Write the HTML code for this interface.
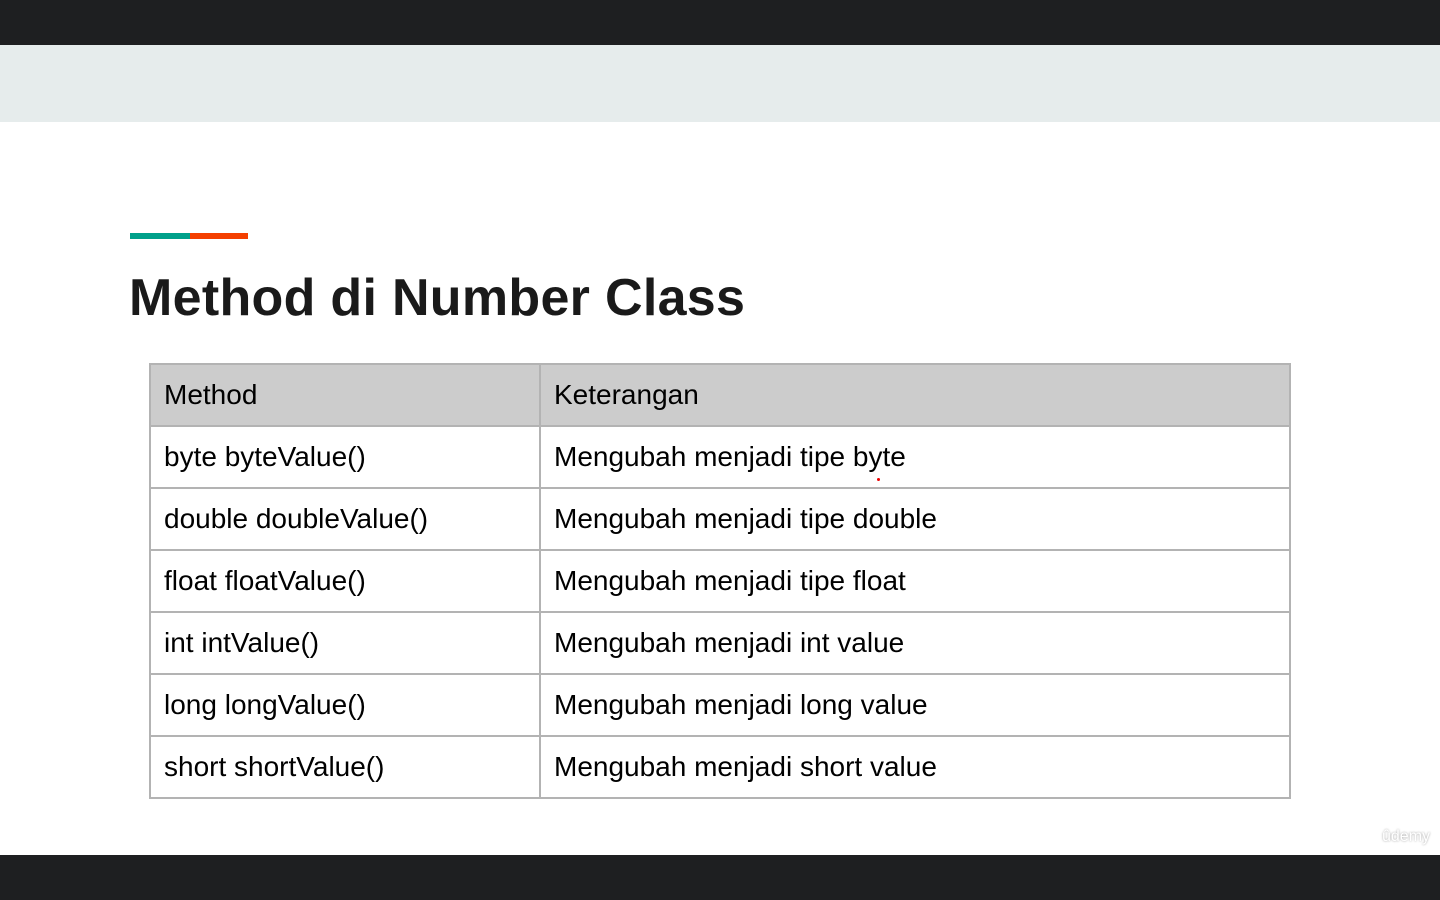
<!DOCTYPE html><html><head><style>
body{margin:0;width:1440px;height:900px;background:#fff;position:relative;overflow:hidden;font-family:"Liberation Sans",sans-serif}
.d{position:absolute;left:0;width:1440px;background:#1e1f21}
table{position:absolute;left:149px;top:363px;border-collapse:collapse;width:1142px}
td{border:2px solid #b3b3b3;height:62px;padding:0 0 0 13px;font-size:28px;color:#000;box-sizing:border-box}
tr.h td{background:#cccccc}
</style></head><body>
<div class="d" style="top:0;height:45px"></div>
<div style="position:absolute;top:45px;left:0;width:1440px;height:77px;background:#e6ecec"></div>
<div class="d" style="top:855px;height:45px"></div>
<div style="position:absolute;left:130px;top:233px;width:60px;height:6px;background:#00a08a"></div>
<div style="position:absolute;left:190px;top:233px;width:58px;height:6px;background:#f43f00"></div>
<div style="position:absolute;left:129px;top:268px;font-size:52px;font-weight:bold;color:#1a1a1a;letter-spacing:0.3px">Method di Number Class</div>
<table>
<tr class="h"><td style="width:390px">Method</td><td>Keterangan</td></tr>
<tr><td>byte byteValue()</td><td>Mengubah menjadi tipe byte</td></tr>
<tr><td>double doubleValue()</td><td>Mengubah menjadi tipe double</td></tr>
<tr><td>float floatValue()</td><td>Mengubah menjadi tipe float</td></tr>
<tr><td>int intValue()</td><td>Mengubah menjadi int value</td></tr>
<tr><td>long longValue()</td><td>Mengubah menjadi long value</td></tr>
<tr><td>short shortValue()</td><td>Mengubah menjadi short value</td></tr>
</table>
<div style="position:absolute;left:877px;top:478px;width:3px;height:3px;border-radius:50%;background:#e00"></div>
<div style="position:absolute;left:1382px;top:828px;font-size:16px;color:#fff;text-shadow:0 0 2px #999">ûdemy</div>
</body></html>
